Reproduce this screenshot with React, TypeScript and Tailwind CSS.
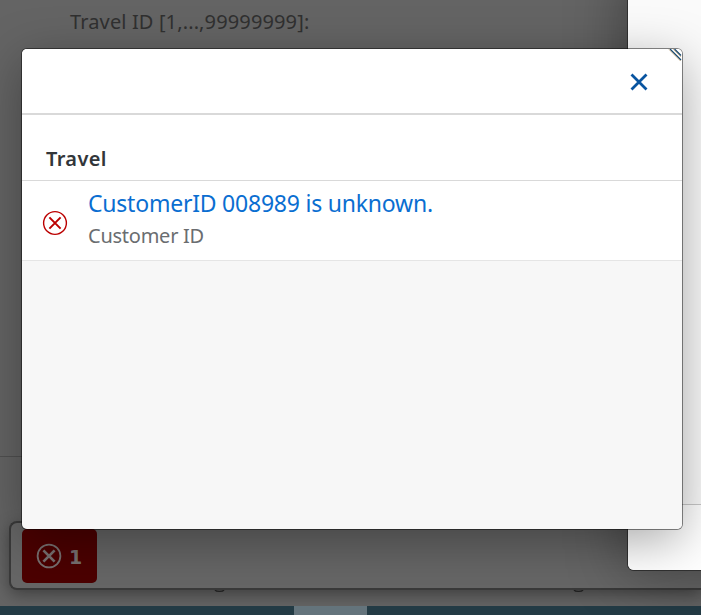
function ErrorIcon({ size, stroke, cross }: { size: number; stroke: number; cross: number }) {
  return (
    <svg width={size} height={size} viewBox="0 0 26 26" fill="none" stroke="currentColor" className="shrink-0">
      <circle cx="13" cy="13" r="11.4" strokeWidth={stroke} />
      <path d="M7.4 7.4 L18.6 18.6 M18.6 7.4 L7.4 18.6" strokeWidth={cross} />
    </svg>
  );
}

function MessageDialog() {
  return (
    <section className="absolute left-[22px] top-[49px] flex h-[480px] w-[660px] flex-col overflow-hidden rounded-[5px] bg-[#f7f7f7]">
      <header className="flex h-[66px] shrink-0 items-center justify-end border-b-2 border-[#d9d9d9] bg-white pr-[34px] pt-[2px]">
        <svg width="18" height="18" viewBox="0 0 18 18" fill="none" stroke="#0854a0" strokeWidth="2.8">
          <path d="M1.5 1.5 L16.5 16.5 M16.5 1.5 L1.5 16.5" />
        </svg>
      </header>
      <h2 className="flex h-[66px] shrink-0 items-end border-b border-[#d9d9d9] bg-white pb-[7px] pl-6 text-[20px] leading-[28px] font-semibold text-[#32363a]">
        <span className="whitespace-nowrap tracking-[0.35px]">Travel</span>
      </h2>
      <div className="flex h-[80px] shrink-0 border-b border-[#e5e5e5] bg-white">
        <div className="ml-5 mt-[29px] w-[46px] text-[#bb0000]">
          <ErrorIcon size={26} stroke={1.4} cross={2} />
        </div>
        <div className="flex flex-col whitespace-nowrap">
          <a className="mt-[6px] text-[23px] leading-[32px] tracking-[-0.22px] text-[#0a6ed1]">CustomerID 008989 is unknown.</a>
          <span className="mt-[3px] text-[20px] leading-[28px] tracking-[-0.25px] text-[#6a6d70]">Customer ID</span>
        </div>
      </div>
    </section>
  );
}

export default function App() {
  return (
    <main className="relative flex h-[615px] w-[701px] flex-col overflow-hidden bg-[#646464] font-['Noto_Sans','Open_Sans',sans-serif]">
      <div className="h-[457px] shrink-0 border-b border-[#505050] pl-[70px] pt-2">
        <span className="block whitespace-nowrap text-[20px] leading-[28px] tracking-[0.13px] text-[#303030]">Travel ID [1,...,99999999]:</span>
      </div>
      <div className="flex h-[149px] shrink-0 flex-col justify-end">
        <div className="ml-[9px] flex h-[69px] shrink-0 items-start rounded-l-[8px] border-2 border-r-0 border-[#3a3a3a] bg-[#666666] pl-[11px] pt-[6px] shadow-[0_5px_16px_rgba(0,0,0,0.35)]">
          <button className="flex h-[54px] w-[75px] items-center gap-[7px] rounded-[5px] bg-[#4c0000] pl-[14px] text-[#777070]">
            <ErrorIcon size={26} stroke={1.8} cross={2.7} />
            <span className="pt-[2px] font-['DejaVu_Sans',sans-serif] text-[19px] leading-[28px] font-bold">1</span>
          </button>
        </div>
        <div className="flex h-[16px] shrink-0 pl-[214px]">
          <svg width="374" height="3" viewBox="0 0 374 3" fill="none" stroke="#202020" strokeWidth="1.3">
            <path d="M1 0 Q2 1.4 5.5 1.4 Q9 1.4 10 0 M360 0 Q361 1.4 364.5 1.4 Q368 1.4 369 0" />
          </svg>
        </div>
      </div>
      <div className="flex h-[9px] shrink-0 bg-[#233b45] pl-[294px]">
        <span className="h-full w-[73px] bg-[#64747c]" />
      </div>

      <div className="absolute -top-[30px] left-[628px] h-[600px] w-[200px] overflow-hidden rounded-bl-[6px] bg-[#fafafa] pt-[534px] shadow-[0_0_0_1px_#303030,0_0_60px_rgba(0,0,0,0.4)]">
        <div className="h-[66px] border-t border-[#c8c8c8] bg-white" />
      </div>

      <div className="absolute left-[22px] top-[49px] h-[480px] w-[660px] rounded-[5px] shadow-[0_0_0_1px_rgba(0,0,0,0.45),0_12px_50px_rgba(0,0,0,0.34)]" />
      <MessageDialog />
      <svg className="absolute left-[668px] top-[49px]" width="14" height="14" viewBox="0 0 14 14" fill="none" strokeWidth="1.3">
        <path d="M2 0 L13 11 M6.5 0 L13 6.5" stroke="#174a75" />
        <path d="M1 0.4 L12.6 12 M5.2 0 L13 7.8" stroke="#9b7638" strokeWidth="0.6" />
      </svg>
    </main>
  );
}
